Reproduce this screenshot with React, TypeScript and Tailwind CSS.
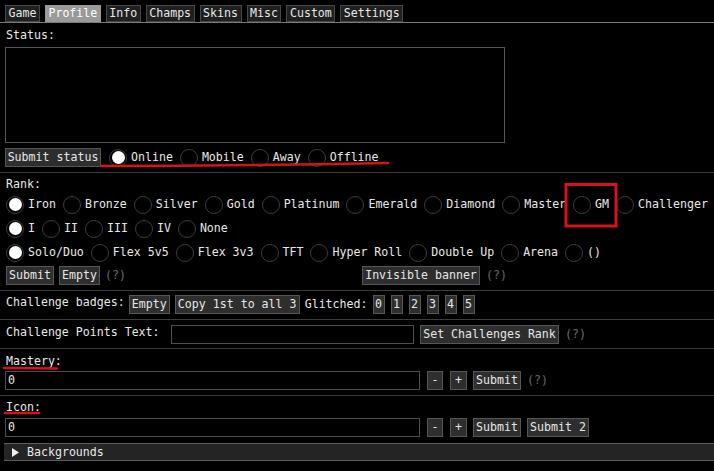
import React from 'react';

const tabs = ['Game', 'Profile', 'Info', 'Champs', 'Skins', 'Misc', 'Custom', 'Settings'];

function Btn({ children, className = '' }: { children: React.ReactNode; className?: string }) {
  return (
    <div className={`h-[19px] px-[2px] border border-[#565656] bg-[#2e2e2e] flex items-center justify-center text-[#e6e6e6] whitespace-pre ${className}`}>
      {children}
    </div>
  );
}

function Radio({ label, on = false }: { label: string; on?: boolean }) {
  return (
    <div className="flex items-center h-[19px] whitespace-pre">
      <span className="w-[18px] h-[18px] rounded-full border border-[#3e3e3e] bg-black flex items-center justify-center">
        {on && <span className="w-[13px] h-[13px] rounded-full bg-white" />}
      </span>
      <span className="ml-[4px]">{label}</span>
    </div>
  );
}

function Help() {
  return <span className="text-[#6c6c6c] whitespace-pre">(?)</span>;
}

function Sep({ className = '' }: { className?: string }) {
  return <div className={`h-px bg-[#3c3c3c] ${className}`} />;
}

function Input({ value = '', className = '' }: { value?: string; className?: string }) {
  return (
    <div className={`h-[19px] border border-[#4e4e4e] bg-black flex items-center px-[2px] text-[#e6e6e6] ${className}`}>
      {value}
    </div>
  );
}

export default function App() {
  return (
    <div className="relative w-[714px] h-[471px] overflow-hidden bg-black text-[#e8e8e8] font-['DejaVu_Sans_Mono','Liberation_Mono',monospace] text-[11.6px] leading-[13px]">
      <div className="flex flex-col pt-[5px]">
        {/* Tabs */}
        <div className="flex gap-[5px] pl-[5px] border-b border-[#7a7a7a]">
          {tabs.map((t) => (
            <div
              key={t}
              className={
                t === 'Profile'
                  ? 'h-[17px] px-[2.5px] border border-[#9a9a9a] bg-[#9a9a9a] text-white flex items-center'
                  : 'h-[17px] px-[2.5px] border border-[#474747] bg-[#1f1f1f] flex items-center'
              }
            >
              {t}
            </div>
          ))}
        </div>

        {/* Status */}
        <div className="pl-[6px] mt-[6px]">Status:</div>
        <div className="ml-[5px] mt-[5px] w-[500px] h-[96px] border border-[#555] bg-black" />
        <div className="flex items-center pl-[5px] mt-[5px] h-[19px]">
          <Btn className="w-[96px]">Submit status</Btn>
          <div className="flex gap-[7px] ml-[8px]">
            <Radio label="Online" on />
            <Radio label="Mobile" />
            <Radio label="Away" />
            <Radio label="Offline" />
          </div>
        </div>
        <Sep className="mt-[5px]" />

        {/* Rank */}
        <div className="pl-[6px] mt-[5px]">Rank:</div>
        <div className="flex gap-[7px] pl-[6px] mt-[4px]">
          {['Iron', 'Bronze', 'Silver', 'Gold', 'Platinum', 'Emerald', 'Diamond', 'Master', 'GM', 'Challenger'].map((r, i) => (
            <Radio key={r} label={r} on={i === 0} />
          ))}
        </div>
        <div className="flex gap-[7px] pl-[6px] mt-[5px]">
          {['I', 'II', 'III', 'IV', 'None'].map((r, i) => (
            <Radio key={r} label={r} on={i === 0} />
          ))}
        </div>
        <div className="flex gap-[7px] pl-[6px] mt-[5px]">
          {['Solo/Duo', 'Flex 5v5', 'Flex 3v3', 'TFT', 'Hyper Roll', 'Double Up', 'Arena', '()'].map((r, i) => (
            <Radio key={r} label={r} on={i === 0} />
          ))}
        </div>
        <div className="flex items-center pl-[6px] mt-[4px] h-[19px]">
          <div className="flex items-center gap-[5px] w-[356px]">
            <Btn className="w-[48px]">Submit</Btn>
            <Btn className="w-[41px]">Empty</Btn>
            <Help />
          </div>
          <div className="flex items-center gap-[6px]">
            <Btn className="w-[118px]">Invisible banner</Btn>
            <Help />
          </div>
        </div>
        <Sep className="mt-[5px]" />

        {/* Challenge badges */}
        <div className="flex items-center pl-[6px] mt-[4px] h-[19px]">
          <span className="whitespace-pre -mt-[4px]">Challenge badges:</span>
          <Btn className="w-[41px] ml-[4px]">Empty</Btn>
          <Btn className="w-[125px] ml-[5px]">Copy 1st to all 3</Btn>
          <span className="ml-[5px] whitespace-pre">Glitched:</span>
          <div className="flex gap-[6px] ml-[5px]">
            {['0', '1', '2', '3', '4', '5'].map((d) => (
              <Btn key={d} className="w-[12px]">{d}</Btn>
            ))}
          </div>
        </div>
        <Sep className="mt-[5px]" />

        <div className="flex items-center pl-[6px] mt-[5px] h-[19px]">
          <span className="whitespace-pre -mt-[4px] w-[165px]">Challenge Points Text:</span>
          <Input className="w-[243px]" />
          <Btn className="w-[139px] ml-[6px]">Set Challenges Rank</Btn>
          <span className="ml-[6px]"><Help /></span>
        </div>
        <Sep className="mt-[4px]" />

        {/* Mastery */}
        <div className="pl-[6px] mt-[6px]">Mastery:</div>
        <div className="flex items-center pl-[5px] mt-[3px] h-[19px]">
          <Input value="0" className="w-[415px]" />
          <Btn className="w-[16px] ml-[7px]">-</Btn>
          <Btn className="w-[17px] ml-[7px]">+</Btn>
          <Btn className="w-[48px] ml-[6px]">Submit</Btn>
          <span className="ml-[6px]"><Help /></span>
        </div>
        <Sep className="mt-[5px]" />

        {/* Icon */}
        <div className="pl-[6px] mt-[5px]">Icon:</div>
        <div className="flex items-center pl-[5px] mt-[4px] h-[19px]">
          <Input value="0" className="w-[415px]" />
          <Btn className="w-[16px] ml-[7px]">-</Btn>
          <Btn className="w-[17px] ml-[7px]">+</Btn>
          <Btn className="w-[48px] ml-[6px]">Submit</Btn>
          <Btn className="w-[62px] ml-[6px]">Submit 2</Btn>
        </div>

        {/* Backgrounds header */}
        <div className="ml-[4px] mt-[6px] h-[18px] border-t border-b border-[#5c5c5c] bg-[#242424] flex items-center">
          <svg width="8" height="9" viewBox="0 0 8 9" className="ml-[8px]">
            <path d="M0 0 L7 4.5 L0 9 Z" fill="#f0f0f0" />
          </svg>
          <span className="ml-[7px]">Backgrounds</span>
        </div>
      </div>

      {/* Red annotations drawn over the screenshot */}
      <svg className="absolute inset-0 pointer-events-none" width="714" height="471">
        <path d="M101 166 Q 240 166 388 163" stroke="#d4141a" strokeWidth="2.5" fill="none" strokeLinecap="round" />
        <rect x="566" y="184.5" width="50" height="41.5" stroke="#d4141a" strokeWidth="3" fill="none" />
        <path d="M4 368 L57 368.5" stroke="#d4141a" strokeWidth="2.5" fill="none" strokeLinecap="round" />
        <path d="M5 413 L39 413" stroke="#d4141a" strokeWidth="2.5" fill="none" strokeLinecap="round" />
      </svg>
    </div>
  );
}
